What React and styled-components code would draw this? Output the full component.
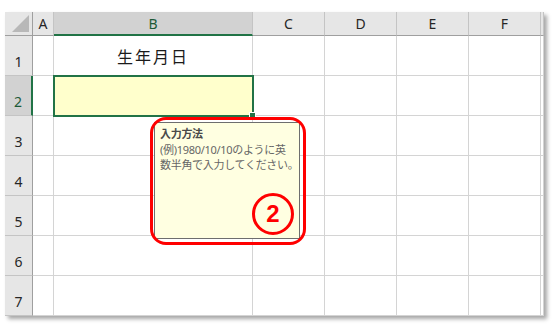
import React from "react";
import styled, { createGlobalStyle } from "styled-components";

const Global = createGlobalStyle`
  body {
    margin: 0;
    background: #ffffff;
    font-family: "Noto Sans", "Noto Sans CJK JP", sans-serif;
  }
`

const Page = styled.div`
  width: 554px;
  height: 330px;
  padding: 12px 0 0 5px;
  box-sizing: border-box;
`

const Sheet = styled.div`
  position: relative;
  display: grid;
  grid-template-columns: 28px 21px 199px 72px 72px 72px 72px 3px;
  grid-template-rows: 24px repeat(7, 40px);
  width: 539px;
  background: #fff;
  box-shadow: 3px 3px 4px rgba(0, 0, 0, 0.35);
`

const Corner = styled.div`
  background: #e6e6e6;
  border-right: 1px solid #9f9f9f;
  border-bottom: 1px solid #9f9f9f;
  display: flex;
  align-items: flex-end;
  justify-content: flex-end;
  padding: 0 3px 3px 0;
  box-sizing: border-box;
`

const Triangle = styled.div`
  width: 0;
  height: 0;
  border-left: 17px solid transparent;
  border-bottom: 17px solid #b8b8b8;
`

const ColHead = styled.div`
  background: ${(p) => (p.$active ? "#d2d2d2" : "#e6e6e6")};
  border-right: 1px solid #c4c4c4;
  border-bottom: ${(p) => (p.$active ? "2px solid #217346" : "1px solid #9f9f9f")};
  box-sizing: border-box;
  display: flex;
  align-items: center;
  justify-content: center;
  font-size: 14px;
  color: ${(p) => (p.$active ? "#1d5a38" : "#262626")};
  padding-top: ${(p) => (p.$active ? "1px" : "0")};
`

const RowHead = styled.div`
  background: ${(p) => (p.$active ? "#d2d2d2" : "#e6e6e6")};
  border-right: ${(p) => (p.$active ? "2px solid #217346" : "1px solid #9f9f9f")};
  border-bottom: 1px solid #c4c4c4;
  box-sizing: border-box;
  display: flex;
  align-items: flex-end;
  justify-content: center;
  padding-bottom: 4px;
  font-size: 14px;
  color: ${(p) => (p.$active ? "#1d5a38" : "#262626")};
`

const Cell = styled.div`
  position: relative;
  border-right: 1px solid #d4d4d4;
  border-bottom: 1px solid #d4d4d4;
  box-sizing: border-box;
  display: flex;
  align-items: center;
  justify-content: center;
  font-family: "Noto Sans CJK JP", sans-serif;
  font-size: 16px;
  letter-spacing: 2px;
  color: #1a1a1a;
  padding-top: 1px;
`

const SelectedCell = styled(Cell)`
  background: #ffffcc;
  outline: 2px solid #217346;
  outline-offset: -1px;
  z-index: 1;
`

const FillHandle = styled.div`
  position: absolute;
  right: -4px;
  bottom: -4px;
  width: 5px;
  height: 5px;
  background: #217346;
  border: 1px solid #fff;
`

const Comment = styled.div`
  position: absolute;
  left: 149px;
  top: 110px;
  width: 146px;
  height: 117px;
  box-sizing: border-box;
  background: #ffffe1;
  border: 1px solid #6e6e6e;
  padding: 3px 0 0 5px;
  font-family: "Noto Sans", "Noto Sans CJK JP", sans-serif;
  font-size: 11px;
  letter-spacing: -0.3px;
  line-height: 15.5px;
  color: #666666;
  white-space: nowrap;
  z-index: 2;
`

const CommentTitle = styled.div`
  font-weight: bold;
  color: #4a4a4a;
`

const Annotation = styled.div`
  position: absolute;
  left: 145px;
  top: 105px;
  width: 156px;
  height: 128px;
  box-sizing: border-box;
  border: 3.5px solid #ff0000;
  border-radius: 16px;
  z-index: 3;
`

const Badge = styled.div`
  position: absolute;
  left: 247px;
  top: 181px;
  width: 42px;
  height: 42px;
  box-sizing: border-box;
  border: 3px solid #ff0000;
  border-radius: 50%;
  display: flex;
  align-items: center;
  justify-content: center;
  font-family: "Liberation Sans", sans-serif;
  font-weight: bold;
  font-size: 24px;
  color: #ff0000;
  z-index: 4;
`

const cols = ["A", "B", "C", "D", "E", "F"]
const rows = [1, 2, 3, 4, 5, 6, 7]

export default function App() {
  return (
    <Page>
      <Global />
      <Sheet>
        <Corner><Triangle /></Corner>
        {cols.map((c) => (
          <ColHead key={c} $active={c === "B"}>{c}</ColHead>
        ))}
        <ColHead />
        {rows.map((r) => (
          <React.Fragment key={r}>
            <RowHead $active={r === 2}>{r}</RowHead>
            {cols.map((c) => {
              if (r === 2 && c === "B") {
                return (
                  <SelectedCell key={c}>
                    <FillHandle />
                  </SelectedCell>
                )
              }
              return <Cell key={c}>{r === 1 && c === "B" ? "生年月日" : null}</Cell>
            })}
            <Cell />
          </React.Fragment>
        ))}
        <Comment>
          <CommentTitle>入力方法</CommentTitle>
          <div>(例)1980/10/10のように英</div>
          <div>数半角で入力してください。</div>
        </Comment>
        <Annotation />
        <Badge>2</Badge>
      </Sheet>
    </Page>
  )
}
